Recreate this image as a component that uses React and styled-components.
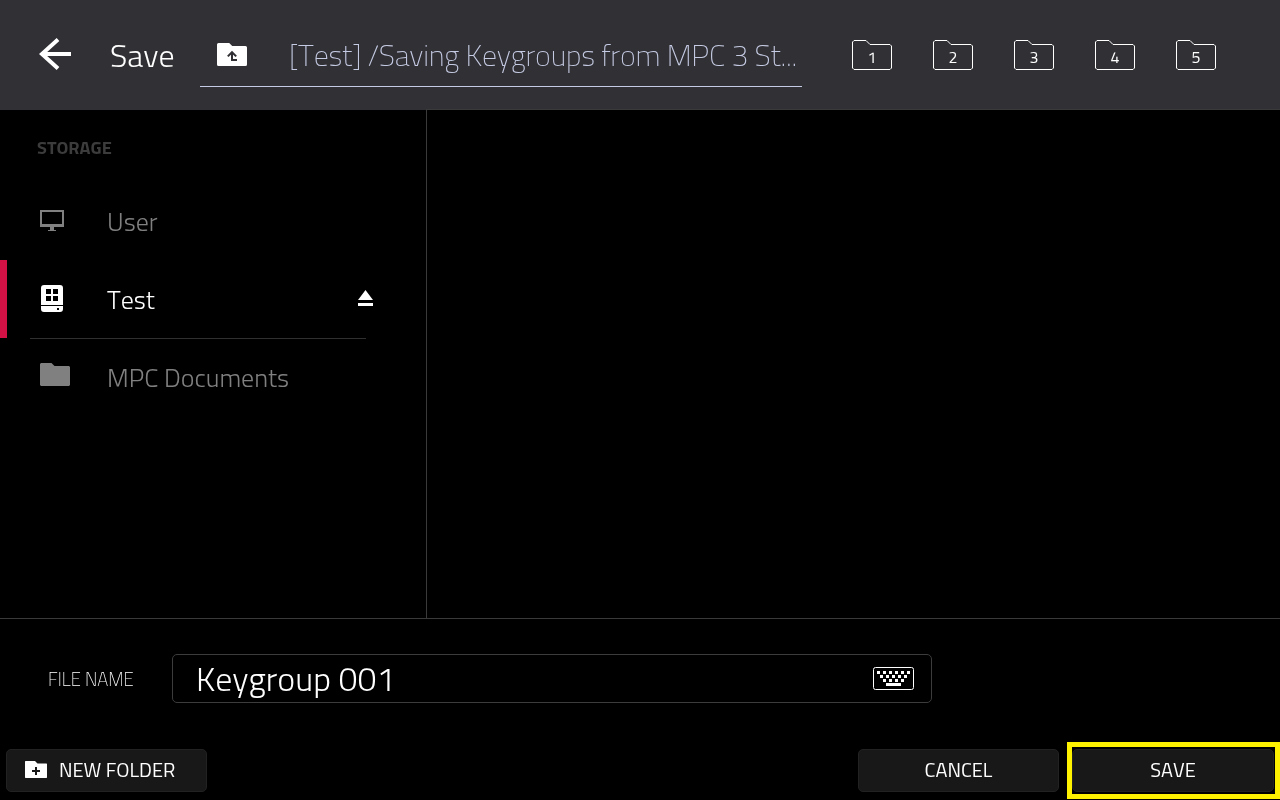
import React, { useState } from "react";
import styled, { createGlobalStyle } from "styled-components";

const GlobalStyle = createGlobalStyle`
  * {
    box-sizing: border-box;
  }
  body {
    margin: 0;
    background: #000;
    font-family: "Titillium Web", Roboto, "Open Sans", sans-serif;
    font-kerning: none;
  }
  svg {
    display: block;
    flex-shrink: 0;
  }
  button,
  input {
    font-family: inherit;
    font-kerning: none;
  }
  button {
    cursor: pointer;
  }
`;

const Screen = styled.div`
  display: flex;
  flex-direction: column;
  width: 1280px;
  height: 800px;
  overflow: hidden;
  color: #fff;
  /* own layer, keeps the thin weights in greyscale smoothing */
  will-change: transform;
`;

const Header = styled.header`
  display: flex;
  height: 109px;
  background: #313035;
`;
const IconButton = styled.button`
  display: flex;
  padding: 0;
  border: none;
  background: transparent;
  color: inherit;
`;
const BackButton = styled(IconButton)`
  margin: 38px 0 0 39px;
  height: 32px;
`;
const Title = styled.h1`
  width: 90px;
  margin: 36px 0 0 38px;
  font-size: 32px;
  font-weight: 300;
  line-height: 38px;
  white-space: nowrap;
`;
const PathBar = styled.div`
  display: flex;
  width: 602px;
  height: 87px;
  padding-left: 17px;
  border-bottom: 1px solid #c5cbe3;
`;
const UpButton = styled(IconButton)`
  margin-top: 43px;
  height: 23px;
`;
const PathText = styled.span`
  margin: 36px 0 0 42px;
  font-size: 30px;
  font-weight: 200;
  line-height: 38px;
  letter-spacing: -0.22px;
  color: #c5cbe3;
  white-space: nowrap;
`;
const Shortcuts = styled.div`
  display: flex;
  gap: 41px;
  margin: 40px 0 0 50px;
`;
const Shortcut = styled(IconButton)`
  display: grid;
  width: 40px;
  height: 30px;
  > * {
    grid-area: 1 / 1;
  }
  span {
    padding-top: 7px;
    font-size: 16px;
    line-height: 20px;
    text-align: center;
  }
`;

const Browser = styled.main`
  display: flex;
  height: 509px;
`;
const Sidebar = styled.aside`
  width: 426px;
  border-top: 1px solid #313035;
`;
const FileList = styled.section`
  flex: 1;
  border-top: 1px solid #3a3a3a;
  border-left: 1px solid #3a3a3a;
`;
const SectionTitle = styled.h2`
  height: 72px;
  margin: 0;
  padding: 26px 0 0 37px;
  font-size: 18.2px;
  font-weight: 700;
  line-height: 22px;
  color: #3c3c3c;
`;
const Row = styled.div`
  display: flex;
  align-items: center;
  height: 78px;
  border-left: 7px solid ${({ $active }) => ($active ? "#d31145" : "transparent")};
  color: ${({ $active }) => ($active ? "#fff" : "#808080")};
  cursor: pointer;
`;
const RowIcon = styled.span`
  width: 100px;
  height: 29px;
  padding-left: ${({ $left }) => $left}px;
  padding-top: ${({ $top }) => $top}px;
`;
const RowName = styled.span`
  width: 251px;
  font-size: 26px;
  font-weight: 300;
  white-space: nowrap;
`;
const EjectButton = styled(IconButton)`
  padding-bottom: 2px;
`;
const Divider = styled.hr`
  width: 336px;
  height: 1px;
  margin: 0 0 -1px 30px;
  border: none;
  background: #303030;
`;

const Footer = styled.footer`
  flex: 1;
  border-top: 1px solid #3a3a3a;
`;
const NameRow = styled.label`
  display: flex;
  align-items: center;
  height: 49px;
  margin: 35px 0 39px;
  padding-left: 48px;
`;
const NameLabel = styled.span`
  width: 124px;
  font-size: 18.5px;
  font-weight: 200;
  padding-top: 1px;
`;
const NameField = styled.span`
  display: flex;
  align-items: center;
  justify-content: space-between;
  width: 760px;
  height: 49px;
  padding: 0 17px 0 23px;
  border: 1px solid #3c3c3c;
  border-radius: 5px;
`;
const NameInput = styled.input`
  width: 600px;
  height: 47px;
  padding: 0 0 1px;
  border: none;
  outline: none;
  background: transparent;
  color: #fff;
  font-size: 34px;
  font-weight: 300;
`;
const Actions = styled.div`
  display: flex;
  align-items: center;
  height: 57px;
  padding-left: 6px;
`;
const ActionButton = styled.button`
  display: flex;
  align-items: center;
  justify-content: ${({ $left }) => ($left ? "flex-start" : "center")};
  gap: 12px;
  width: ${({ $width }) => $width || 201}px;
  height: 43px;
  padding: 0 0 2px ${({ $left }) => ($left ? 18 : 0)}px;
  border: 1px solid #222;
  border-radius: 5px;
  background: #181818;
  color: #fff;
  font-size: 20px;
  font-weight: 400;
  white-space: nowrap;
`;
const Spacer = styled.div`
  flex: 1;
`;
const Highlight = styled.div`
  display: flex;
  align-items: center;
  width: 213px;
  height: 57px;
  margin-left: 8px;
  border: 5px solid #fff200;
`;

const BackIcon = () => (
  <svg width="33" height="32" viewBox="0 0 33 32" fill="none" stroke="#fff" strokeWidth="4">
    <path d="M19 1.6 L3 16 L19 30.4 M3 16 H32" />
  </svg>
);

const FolderUpIcon = () => (
  <svg width="30" height="23" viewBox="0 0 30 23">
    <path
      fill="#fff"
      d="M1.5 0H12.2L15.2 3H28.5Q30 3 30 4.500V21.500Q30 23 28.500 23H1.500Q0 23 0 21.500V1.500Q0 0 1.500 0Z"
    />
    <path d="M10.800 13.400 L15 9.200 L19.200 13.400 M15 10V17H20" fill="none" stroke="#313035" strokeWidth="2" />
  </svg>
);

const FolderOutline = () => (
  <svg width="40" height="30" viewBox="0 0 40 30" fill="none" stroke="#fff">
    <path d="M2 .5H14L18 4.500H38L39.500 6V28L38 29.500H2L.5 28V2Z" />
  </svg>
);

const MonitorIcon = () => (
  <svg width="24" height="21" viewBox="0 0 24 21" fill="currentColor" shapeRendering="crispEdges">
    <path fillRule="evenodd" d="M0 0H24V17H0ZM2 2V14H22V2Z" />
    <path d="M10 17H14V20H16V21H8V20H10Z" />
  </svg>
);

const DriveIcon = () => (
  <svg width="22" height="27" viewBox="0 0 22 27">
    <path fill="currentColor" d="M3 0H19Q22 0 22 3V20H0V3Q0 0 3 0ZM0 21H22V24Q22 27 19 27H3Q0 27 0 24Z" />
    <path fill="#000" d="M5 4H10V9H5ZM12 4H17V9H12ZM5 11H10V16H5ZM12 11H17V16H12ZM16 23H18V25H16Z" />
  </svg>
);

const FolderIcon = () => (
  <svg width="30" height="23" viewBox="0 0 30 23" fill="currentColor">
    <path d="M1 0H11.500L14.500 3H29L30 4V22L29 23H1L0 22V1Z" />
  </svg>
);

const EjectIcon = () => (
  <svg width="15" height="16" viewBox="0 0 15 16" fill="currentColor">
    <path d="M7.500 0L15 10H0ZM0 13H15V16H0Z" />
  </svg>
);

const NewFolderIcon = () => (
  <svg width="22" height="17" viewBox="0 0 22 17">
    <path fill="#fff" d="M.5 0H10L12.500 2.500H21.500L22 3V16.500L21.500 17H.5L0 16.500V.5Z" />
    <path d="M7 10H15M11 6V14" stroke="#181818" strokeWidth="2" />
  </svg>
);

const keyRows = [
  { y: 4, xs: [4, 10, 16, 22, 28, 34] },
  { y: 8, xs: [7, 13, 19, 25, 31] },
  { y: 12, xs: [10, 16, 22, 28] },
];

const KeyboardIcon = () => (
  <svg width="41" height="23" viewBox="0 0 41 23">
    <rect x=".5" y=".5" width="40" height="22" rx="2" fill="none" stroke="#fff" />
    {keyRows.map((row) =>
      row.xs.map((x) => (
        <rect key={`${x}-${row.y}`} x={x} y={row.y} width="3" height="3" fill="#fff" />
      ))
    )}
    <rect x="13" y="16" width="15" height="3" fill="#fff" />
  </svg>
);

const places = [
  { name: "User", icon: <MonitorIcon />, left: 33, top: 3 },
  { name: "Test", icon: <DriveIcon />, left: 34, top: 0, removable: true },
  { name: "MPC Documents", icon: <FolderIcon />, left: 33, top: 0 },
];

export default () => {
  const [place, setPlace] = useState("Test");
  const [fileName, setFileName] = useState("Keygroup 001");

  return (
    <>
      <GlobalStyle />
      <Screen>
        <Header>
          <BackButton aria-label="Back">
            <BackIcon />
          </BackButton>
          <Title>Save</Title>
          <PathBar>
            <UpButton aria-label="Up one folder">
              <FolderUpIcon />
            </UpButton>
            <PathText>[Test] /Saving Keygroups from MPC 3 St...</PathText>
          </PathBar>
          <Shortcuts>
            {[1, 2, 3, 4, 5].map((n) => (
              <Shortcut key={n}>
                <FolderOutline />
                <span>{n}</span>
              </Shortcut>
            ))}
          </Shortcuts>
        </Header>
        <Browser>
          <Sidebar>
            <SectionTitle>STORAGE</SectionTitle>
            {places.map(({ name, icon, left, top, removable }) => (
              <React.Fragment key={name}>
                <Row $active={place === name} onClick={() => setPlace(name)}>
                  <RowIcon $left={left} $top={top}>
                    {icon}
                  </RowIcon>
                  <RowName>{name}</RowName>
                  {removable && (
                    <EjectButton aria-label="Eject">
                      <EjectIcon />
                    </EjectButton>
                  )}
                </Row>
                {removable && <Divider />}
              </React.Fragment>
            ))}
          </Sidebar>
          <FileList />
        </Browser>
        <Footer>
          <NameRow>
            <NameLabel>FILE NAME</NameLabel>
            <NameField>
              <NameInput value={fileName} onChange={(e) => setFileName(e.target.value)} />
              <KeyboardIcon />
            </NameField>
          </NameRow>
          <Actions>
            <ActionButton $left>
              <NewFolderIcon />
              NEW FOLDER
            </ActionButton>
            <Spacer />
            <ActionButton>CANCEL</ActionButton>
            <Highlight>
              <ActionButton $width={202}>SAVE</ActionButton>
            </Highlight>
          </Actions>
        </Footer>
      </Screen>
    </>
  );
};
